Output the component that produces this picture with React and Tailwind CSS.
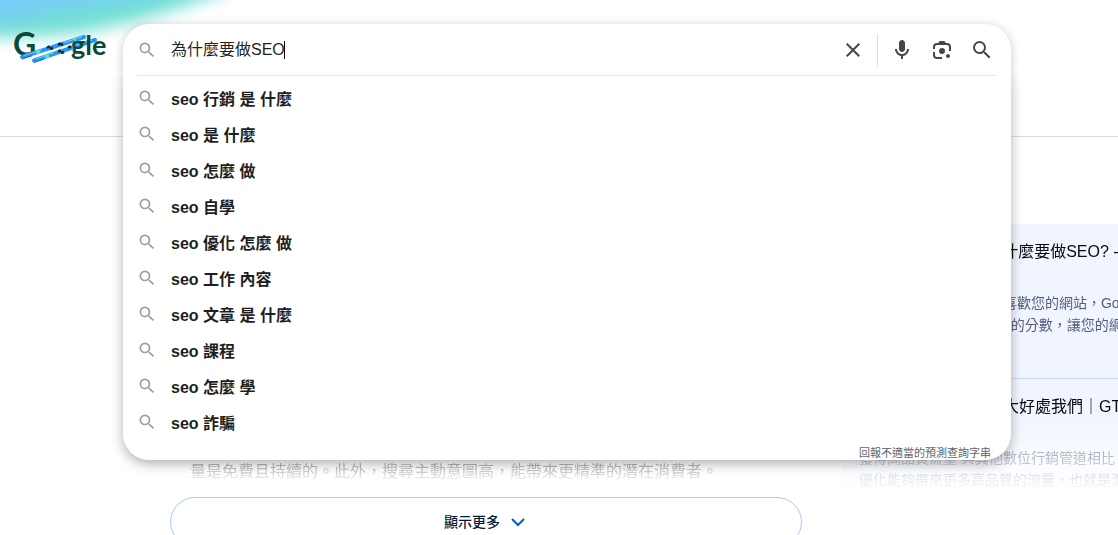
const suggestions = [
  "seo 行銷 是 什麼",
  "seo 是 什麼",
  "seo 怎麼 做",
  "seo 自學",
  "seo 優化 怎麼 做",
  "seo 工作 內容",
  "seo 文章 是 什麼",
  "seo 課程",
  "seo 怎麼 學",
  "seo 詐騙",
];

const sources = [
  {
    title: "SEO優化是什麼? 為什麼要做SEO? - 網站行銷",
    lines: [
      "網站優化 如果搜尋引擎喜歡您的網站，Google",
      "就會 給予 網站 更高更好的分數，讓您的網站排名",
    ],
  },
  {
    title: "了解搜尋引擎優化十大好處我們｜GTMC",
    lines: [
      "獲得高品質流量 與其他數位行銷管道相比，搜尋",
      "優化能夠帶來更多高品質的流量，也就是潛在客戶",
    ],
  },
];

function SearchIcon({ className }) {
  return (
    <svg viewBox="0 0 24 24" fill="currentColor" className={className} aria-hidden="true">
      <path d="M15.5 14h-.79l-.28-.27A6.471 6.471 0 0 0 16 9.5 6.5 6.5 0 1 0 9.5 16c1.61 0 3.09-.59 4.23-1.57l.27.28v.79l5 4.99L20.49 19l-4.99-5zm-6 0C7.01 14 5 11.99 5 9.5S7.01 5 9.5 5 14 7.01 14 9.5 11.99 14 9.5 14z" />
    </svg>
  );
}

function CloseIcon() {
  return (
    <svg viewBox="0 0 24 24" fill="currentColor" className="size-6" aria-hidden="true">
      <path d="M19 6.41L17.59 5 12 10.59 6.41 5 5 6.41 10.59 12 5 17.59 6.41 19 12 13.41 17.59 19 19 17.59 13.41 12z" />
    </svg>
  );
}

function MicIcon() {
  return (
    <svg viewBox="0 0 24 24" fill="currentColor" className="size-6" aria-hidden="true">
      <path d="M12 14c1.66 0 3-1.34 3-3V5c0-1.66-1.34-3-3-3S9 3.34 9 5v6c0 1.66 1.34 3 3 3z" />
      <path d="M17 11c0 2.76-2.24 5-5 5s-5-2.24-5-5H5c0 3.53 2.61 6.43 6 6.92V21h2v-3.08c3.39-.49 6-3.39 6-6.92h-2z" />
    </svg>
  );
}

function LensIcon() {
  return (
    <svg viewBox="0 0 24 24" className="size-6" aria-hidden="true">
      <g fill="none" stroke="currentColor" strokeWidth="2">
        <path d="M4 11V9a3 3 0 0 1 3-3h10a3 3 0 0 1 3 3v4" />
        <path d="M4 14v3a3 3 0 0 0 3 3h5" />
      </g>
      <path d="M9.500 3h5L16 5.500H8z" fill="currentColor" />
      <circle cx="12" cy="13" r="3" fill="currentColor" />
      <circle cx="18" cy="18" r="2" fill="currentColor" />
    </svg>
  );
}

function Logo() {
  return (
    <svg
      viewBox="0 0 94 38"
      className="h-[38px] w-[94px]"
      role="img"
      aria-label="Google"
      fontFamily="Lato, sans-serif"
      fontWeight="700"
    >
      <text x="-1" y="26" fontSize="32" fill="#0b4a38">
        G
      </text>
      <g fill="none">
        <path d="M8 27 L70 7" stroke="#2795f5" strokeWidth="4" strokeLinecap="round" />
        <path d="M20 30.5 L81 10" stroke="#2795f5" strokeWidth="4" strokeLinecap="round" />
        <path d="M10 25.5 L28 19.7 M50 12.6 L68 6.8" stroke="#7cc8ff" strokeWidth="1" />
        <path d="M22 28.8 L40 22.8 M58 16.7 L78 10" stroke="#7cc8ff" strokeWidth="1" />
        <path d="M22 22.5 L26 21.2 M31 26.8 L35 25.5 M60 10.2 L62 9.6" stroke="#4fe3c8" strokeWidth="4" />
        <path d="M33 17.5 L36 16.5 M36 19 L39 18 M44 14.5 L47 13.5 M47 15 L49 14.3" stroke="#06283d" strokeWidth="2.5" />
        <path d="M44 21.5 L47 20.5 M47 23 L50 22 M54 17.5 L57 16.5" stroke="#06283d" strokeWidth="2.5" />
        <path d="M8 29 L18 25.8 M20 32.5 L30 29" stroke="#1267d6" strokeWidth="1" />
      </g>
      <text x="57" y="25" fontSize="27" fill="#0b4a38">
        gle
      </text>
    </svg>
  );
}

function SearchBox() {
  return (
    <form className="relative z-10 min-w-0 flex-1" onSubmit={(e) => e.preventDefault()}>
      <div className="rounded-t-[26px] bg-white px-3.5 shadow-[0_2px_8px_1px_rgba(64,60,67,0.24)]">
        <div className="flex h-[52px] items-center border-b border-[#e3e5e8]">
          <SearchIcon className="size-5 shrink-0 text-[#9aa0a6]" />
          <div className="ml-3.5 flex min-w-0 flex-1 items-center">
            <input
              type="text"
              aria-label="搜尋"
              defaultValue="為什麼要做SEO"
              className="field-sizing-content h-6 bg-transparent text-base text-[#1f1f1f] outline-none"
            />
            <span className="-ml-px h-[18px] w-px bg-black" />
          </div>
          <div className="flex items-center pr-[3px] text-[#474747]">
            <button type="button" aria-label="清除" className="mr-3">
              <CloseIcon />
            </button>
            <span className="mr-3 h-8 w-px bg-[#dadce0]" />
            <div className="flex gap-4">
              <button type="button" aria-label="語音搜尋">
                <MicIcon />
              </button>
              <button type="button" aria-label="以圖搜尋">
                <LensIcon />
              </button>
              <button type="submit" aria-label="Google 搜尋">
                <SearchIcon className="size-6" />
              </button>
            </div>
          </div>
        </div>
      </div>

      {/* Suggestions */}
      <div className="relative rounded-b-[26px] bg-white px-3.5 pt-1.5 shadow-[0_4px_12px_rgba(32,33,36,0.35)] [clip-path:inset(0_-24px_-24px_-24px)]">
        <ul>
          {suggestions.map((text) => (
            <li key={text}>
              <a href="#" className="flex h-9 items-center text-base font-bold text-[#1f1f1f]">
                <SearchIcon className="mr-3.5 mb-1 size-5 text-[#9aa0a6]" />
                {text}
              </a>
            </li>
          ))}
        </ul>
        <div className="flex justify-end pt-1 pr-1.5">
          <a href="#" className="text-[11px] leading-[14px] text-[#5f6368]">
            回報不適當的預測查詢字串
          </a>
        </div>
      </div>
    </form>
  );
}

export default function App() {
  return (
    <div className="h-screen overflow-hidden bg-white font-['Liberation_Sans','Noto_Sans_CJK_TC',sans-serif]">
      <header className="relative flex h-[137px] items-start border-b border-[#dadce0] pt-6 pr-[107px] pl-3.5">
        <svg
          className="absolute top-0 left-0 h-24 w-[320px]"
          viewBox="0 0 320 96"
          aria-hidden="true"
        >
          <defs>
            <linearGradient id="sky" gradientUnits="userSpaceOnUse" x1="0" y1="0" x2="7" y2="39">
              <stop offset="0.3" stopColor="#78cdf8" />
              <stop offset="0.8" stopColor="#72e0d2" />
            </linearGradient>
            <filter id="soft" x="-20%" y="-50%" width="140%" height="200%" colorInterpolationFilters="sRGB">
              <feGaussianBlur stdDeviation="8" />
            </filter>
          </defs>
          <path
            d="M-60 -60 H290 L220 -6 C176 10 130 24 90 31 C50 37 20 38 -60 39 Z"
            fill="url(#sky)"
            filter="url(#soft)"
          />
        </svg>
        <a href="#" className="relative mt-1.5 mr-[15px] shrink-0">
          <Logo />
        </a>
        <SearchBox />
      </header>

      <main className="flex pt-[87px] pl-[170px]">
        {/* Overview text */}
        <section className="w-[632px] shrink-0 pt-[236px]">
          <p className="px-5 text-base leading-6 whitespace-nowrap text-[#a0a0a0] [mask-image:linear-gradient(to_bottom,black_0%,transparent_100%)]">
            量是免費且持續的。此外，搜尋主動意圖高，能帶來更精準的潛在消費者。
          </p>
          <button
            type="button"
            className="mt-[13px] flex h-[50px] w-full items-center justify-center gap-2.5 rounded-full border border-[#a8c7fa] pr-0.5 text-sm font-medium text-[#001d35]"
          >
            顯示更多
            <svg viewBox="0 0 16 16" className="size-4" aria-hidden="true">
              <path d="M2 5l6 6 6-6" fill="none" stroke="#0b57d0" strokeWidth="2" />
            </svg>
          </button>
        </section>

        {/* Sources */}
        <aside className="ml-10 h-[270px] min-w-0 flex-1 overflow-hidden bg-[#f0f5ff] [mask-image:linear-gradient(to_bottom,black_70%,rgb(0_0_0/0.4)_87%,rgb(0_0_0/0.12)_95%,transparent_100%)]">
          {sources.map((source) => (
            <article
              key={source.title}
              className="border-b border-[#c2dcff] px-[17px] pt-4 pb-[42px] whitespace-nowrap"
            >
              <h3 className="text-base leading-6 text-[#0a0a0a]">{source.title}</h3>
              <p className="mt-7 text-sm leading-[22px] text-[#545d7e]">
                {source.lines[0]}
                <br />
                {source.lines[1]}
              </p>
            </article>
          ))}
        </aside>
      </main>
    </div>
  );
}
